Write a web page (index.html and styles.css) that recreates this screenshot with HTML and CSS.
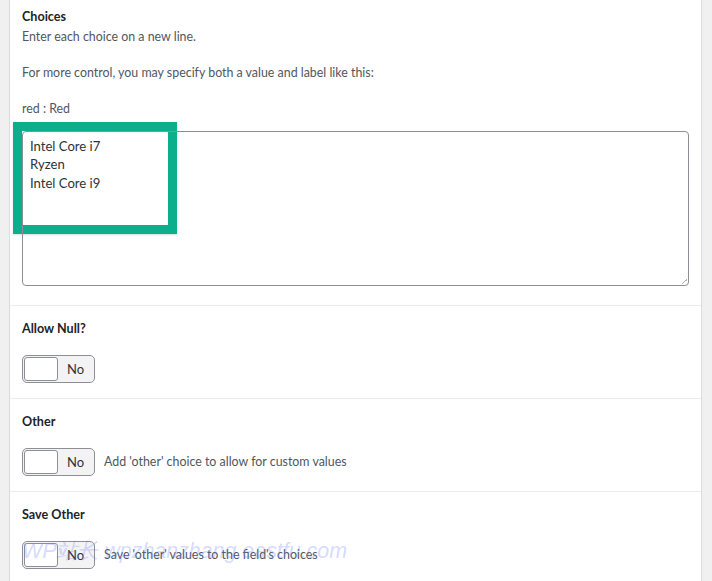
FILE: index.html
```html
<!DOCTYPE html>
<html lang="en">
<head>
<meta charset="utf-8">
<title>Field settings</title>
<link rel="stylesheet" href="styles.css">
</head>
<body>
<div class="panel">
  <div class="section section-first">
    <div class="label">Choices</div>
    <p class="desc">Enter each choice on a new line.<br><br>For more control, you may specify both a value and label like this:<br><br>red : Red</p>
    <div class="ta-wrap">
      <div class="textarea">Intel Core i7<br>Ryzen<br>Intel Core i9</div>
      <div class="highlight"></div>
      <div class="grip"></div>
    </div>
  </div>
  <div class="section">
    <div class="label">Allow Null?</div>
    <div class="row">
      <div class="toggle"><span class="knob"></span><span class="toggle-text">No</span></div>
    </div>
  </div>
  <div class="section">
    <div class="label">Other</div>
    <div class="row">
      <div class="toggle"><span class="knob"></span><span class="toggle-text">No</span></div>
      <span class="row-desc">Add 'other' choice to allow for custom values</span>
    </div>
  </div>
  <div class="section section-last">
    <div class="label">Save Other</div>
    <div class="row">
      <div class="toggle"><span class="knob"></span><span class="toggle-text">No</span></div>
      <span class="row-desc">Save 'other' values to the field's choices</span>
    </div>
    <div class="watermark">WP站长 wpzhanzhang.eastfu.com</div>
  </div>
</div>
</body>
</html>
```
FILE: styles.css
```css
html, body {
  margin: 0;
  padding: 0;
  background: #f0f0f1;
  height: 581px;
  overflow: hidden;
}
body {
  font-family: Lato, "Noto Sans", sans-serif;
  font-size: 12.4px;
  color: #1d2327;
}
.panel {
  margin: 0 10px 0 9px;
  background: #fff;
  border-left: 1px solid #dcdcde;
  border-right: 1px solid #dcdcde;
  height: 581px;
}
.section {
  position: relative;
  padding: 13px 12px 15px 12px;
  border-bottom: 1px solid #ececec;
}
.section-first {
  padding-top: 7px;
  padding-bottom: 19px;
}
.section-last {
  border-bottom: none;
}
.label {
  font-weight: 700;
  font-size: 12.6px;
  line-height: 20px;
  color: #1d2327;
}
.desc {
  margin: 1px 0 0 0;
  line-height: 17.9px;
  color: #50575e;
}
.ta-wrap {
  position: relative;
  margin-top: 13px;
}
.textarea {
  position: relative;
  z-index: 1;
  height: 155px;
  box-sizing: border-box;
  border: 1px solid #8c8f94;
  border-radius: 4px;
  padding: 5px 7px 4px;
  font-size: 13.1px;
  line-height: 18.5px;
  color: #2c3338;
}
.highlight {
  position: absolute;
  z-index: 0;
  left: -9px;
  top: -9px;
  width: 146px;
  height: 94px;
  border: 9px solid #0caf8c;
  background: #fff;
  box-shadow: 0 1px 2px rgba(0,0,0,0.15);
}
.grip {
  position: absolute;
  z-index: 2;
  right: 2px;
  bottom: 2px;
  width: 5px;
  height: 5px;
  background: linear-gradient(135deg, transparent 45%, #b0b4b8 45%, #b0b4b8 60%, transparent 60%);
}
.row {
  display: flex;
  align-items: center;
  gap: 9px;
  margin-top: 16px;
}
.toggle {
  display: flex;
  align-items: center;
  box-sizing: border-box;
  width: 73px;
  height: 28px;
  border: 1px solid #8c8f94;
  border-radius: 5px;
  background: #f3f3f4;
  padding: 1px;
}
.knob {
  display: block;
  box-sizing: border-box;
  width: 34px;
  height: 24px;
  border: 1px solid #8c8f94;
  border-radius: 3px;
  background: #fff;
}
.toggle-text {
  flex: 1;
  text-align: center;
  font-size: 13px;
  color: #2c3338;
}
.row-desc {
  color: #50575e;
  font-size: 12.4px;
}
.watermark {
  position: absolute;
  left: 12px;
  top: 44px;
  font-family: "Liberation Sans", sans-serif;
  font-style: italic;
  font-size: 21.4px;
  color: rgba(110, 130, 255, 0.3);
  white-space: nowrap;
}
```
